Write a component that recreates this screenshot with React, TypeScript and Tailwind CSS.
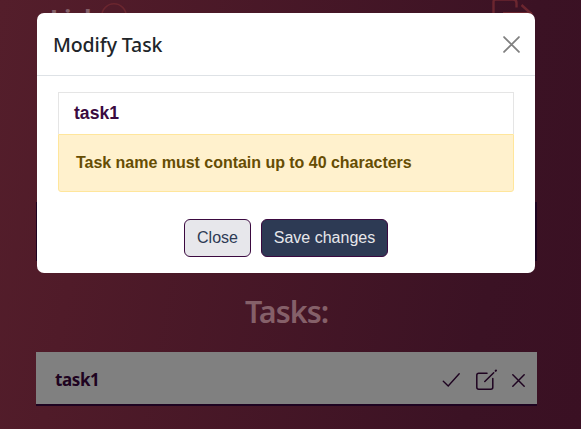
function CheckIcon() {
  return (
    <svg width="19" height="16" viewBox="0 0 19 16" fill="none" stroke="currentColor" strokeWidth="1.4" strokeLinecap="round">
      <path d="M1.3 9.3 6.2 14 17.2 1.7" />
    </svg>
  );
}

function EditIcon() {
  return (
    <svg width="23" height="22" viewBox="0 0 23 22" fill="none" stroke="currentColor" strokeWidth="1.5" strokeLinecap="round" strokeLinejoin="round">
      <path d="M12 4.3H3.8A2 2 0 0 0 1.8 6.3V18.3A2 2 0 0 0 3.8 20.3H15.8A2 2 0 0 0 17.8 18.3V9.5" />
      <path d="M9.8 12.5 18.7 3.8" />
      <path d="M20.6 1.9 21 1.5" strokeWidth="2" />
    </svg>
  );
}

function CrossIcon({ size, weight }: { size: number; weight: number }) {
  return (
    <svg width={size} height={size} viewBox="0 0 16 16" fill="none" stroke="currentColor" strokeWidth={weight} strokeLinecap="round">
      <path d="M1 1 15 15M15 1 1 15" />
    </svg>
  );
}

function Page() {
  return (
    <main className="flex h-full flex-col bg-linear-[100deg,#541e2b_0%,#501b29_18%,#3b1224_82%,#3a1023_100%] px-9">
      <header className="flex h-[60px] items-start justify-between pr-[11px] pl-[14px]">
        <div className="flex items-start">
          <h1 className="w-[51px] font-['Noto_Sans',sans-serif] text-[25px] leading-[36px] font-bold text-[#856069]">Lisk</h1>
          <svg className="mt-[3px]" width="26" height="26" viewBox="0 0 26 26" fill="none" stroke="#6b262f" strokeWidth="1.5">
            <circle cx="13" cy="13" r="12.2" />
          </svg>
        </div>
        <svg width="44" height="30" viewBox="0 0 44 30" fill="none" stroke="#6b262f" strokeWidth="2.4">
          <path d="M3.5 30V2Q3.5 -.5 6 -.5H23Q26.5 -.5 26.5 3V7.5M13 13.3H42M31.5 5 42 14.5" />
        </svg>
      </header>
      <div className="mt-[142px] h-[59px] w-[501px] shrink-0 bg-[#1e0320]" />
      <h2 className="mt-[28px] h-[46px] w-[501px] shrink-0 text-center font-['Noto_Sans',sans-serif] text-[30.5px] leading-[44px] font-semibold tracking-[-1px] text-[#856069]">
        Tasks:
      </h2>
      <div className="mt-[17px] flex h-[54px] w-[501px] shrink-0 items-center border-b-2 border-[#1e0320] bg-[#808080] pr-[12px] pl-[19px] text-[#1e0320]">
        <span className="flex-1 pt-[3px] font-['Noto_Sans',sans-serif] text-[17px] leading-6 font-bold tracking-[-0.4px]">task1</span>
        <div className="flex items-center pt-[4px]">
          <CheckIcon />
          <span className="ml-[14px]"><EditIcon /></span>
          <span className="ml-[14px]"><CrossIcon size={13} weight={1.8} /></span>
        </div>
      </div>
    </main>
  );
}

function Modal() {
  return (
    <section role="dialog" className="absolute top-[13px] left-[37px] flex h-[260px] w-[498px] flex-col rounded-[7px] bg-white">
      <header className="flex h-[63px] items-center justify-between border-b border-[#dee2e6] pr-[15.5px] pl-[16px]">
        <h5 className="pt-[2px] font-['Noto_Sans',sans-serif] text-[19.5px] leading-[30px] font-medium tracking-[-0.1px] text-[#212529]">Modify Task</h5>
        <button aria-label="Close" className="text-[#808080]">
          <CrossIcon size={17} weight={1.7} />
        </button>
      </header>
      <div className="px-[21px] pt-[16px] font-['Liberation_Sans',sans-serif] font-bold">
        <div className="flex h-[42px] items-center border border-b-0 border-[#e5e5e5] px-[15px] text-[17.6px] text-[#3b0a40]">task1</div>
        <div className="flex h-[58px] items-center rounded-b-[3px] border border-[#ffe69c] bg-[#fff1cd] px-[17px] text-[16px] tracking-[-0.025px] text-[#664d03]">
          Task name must contain up to 40 characters
        </div>
      </div>
      <footer className="flex justify-center gap-[10px] pt-[27px] font-['Liberation_Sans',sans-serif] text-[16px]">
        <button className="h-[38px] w-[67px] rounded-[6px] border border-[#3b0a40] bg-[#e7e7eb] text-[#2d3a54]">Close</button>
        <button className="h-[38px] w-[127px] rounded-[6px] border border-[#3b0a40] bg-[#2d3a54] text-[#e7e7eb]">Save changes</button>
      </footer>
    </section>
  );
}

export default function App() {
  return (
    <div className="relative h-[429px] w-[581px] overflow-hidden">
      <Page />
      <Modal />
    </div>
  );
}
